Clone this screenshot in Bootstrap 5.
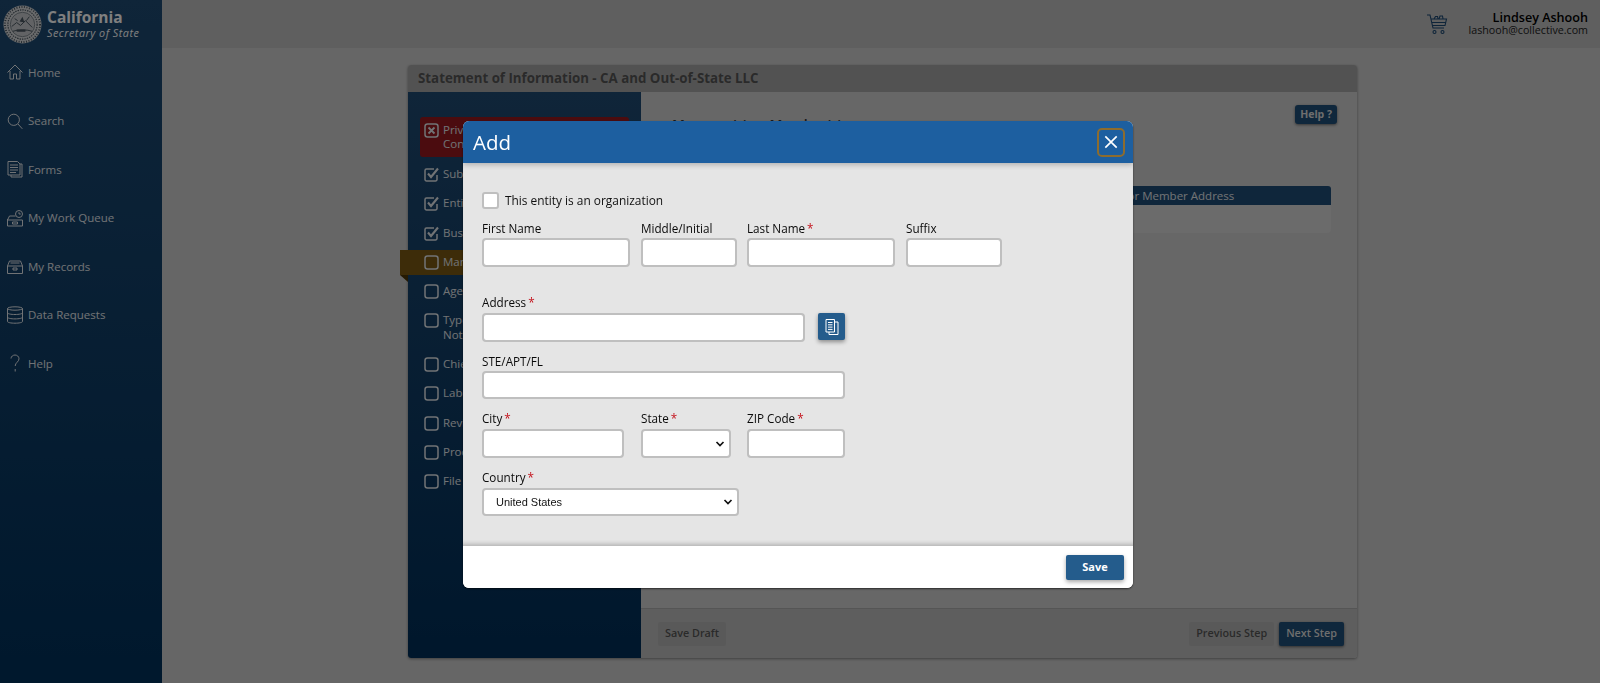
<!DOCTYPE html>
<html lang="en">
<head>
<meta charset="utf-8">
<title>Statement of Information</title>
<link href="https://cdn.jsdelivr.net/npm/bootstrap@5.3.2/dist/css/bootstrap.min.css" rel="stylesheet">
<style>
  html, body { height: 683px; overflow: hidden; }
  body { font-family: "Open Sans", "Liberation Sans", sans-serif; font-size: 12px; background: #cdcdcd; color: #000; }

  /* left menu */
  .side { width: 162px; flex: none; height: 683px; background: linear-gradient(#1e4a72, #00305a); }
  .brand { height: 48px; padding: 5px 0 0 3px; gap: 5px; color: #fff; }
  .brand svg { width: 39px; height: 39px; flex: none; }
  .brand-t { font-size: 15.5px; font-weight: 700; line-height: 18px; margin-top: 3px; }
  .brand-s { font-size: 10.8px; font-style: italic; line-height: 14px; letter-spacing: .5px; }
  .side-link { height: 48.5px; padding-left: 7px; gap: 5px; font-size: 11.5px; color: #e2e6ea; }
  .side-link svg { width: 16px; height: 18px; flex: none; fill: none; stroke: #e2e6ea; stroke-width: 1; }

  /* top strip */
  .top { height: 48px; background: #bebebe; padding-right: 12px; }
  .top svg { width: 22px; height: 22px; fill: none; stroke: #1c4872; stroke-width: 1.1; margin-right: 21px; margin-left: auto; }
  .who { text-align: right; line-height: 12.5px; }
  .who-n { font-size: 12.6px; font-weight: 600; }
  .who-e { font-size: 10.7px; color: #222; }

  /* form card behind the dialog */
  .sheet { width: 949px; height: 593px; margin: 17px 0 0 246px; background: #cfcfcf; border: 0; border-radius: 3px; box-shadow: 0 1px 3px rgba(0,0,0,.4); }
  .sheet-h { height: 27px; background: #a5a5a5; padding: 0 10px; font-size: 13.3px; font-weight: 700; color: #555; border-radius: 3px 3px 0 0; }
  .steps { width: 233px; flex: none; padding: 25px 12px 0; background: linear-gradient(#1f4a72, #002e58); border-radius: 0 0 0 3px; }
  .step { display: flex; gap: 4px; padding: 7.15px 4px; font-size: 11.5px; line-height: 14.7px; color: #e2e6ea; }
  .step svg { width: 15px; height: 15px; flex: none; fill: none; stroke: #e2e6ea; stroke-width: 1.5; }
  .step-err { background: #96181f; border-radius: 3px; padding: 5.5px 4px; margin-bottom: 2.5px; }
  .step-on { position: relative; background: #7a5812; margin: 2px 0 2px -20px; padding: 5.15px 4px 5.15px 24px; }
  .step-on::after { content: ""; position: absolute; left: 0; top: 100%; border-top: 7px solid #4a3406; border-left: 8px solid transparent; }
  .sheet-b { padding: 13px 20px 0 31px; }
  .sheet-ttl { font-size: 14px; font-weight: 600; color: #333; margin-top: 9px; }
  .btn-navy { background: #1f4e78; color: #ddd; border: 0; border-radius: 3px; font-size: 10.5px; font-weight: 700; padding: 0 5px; height: 19px; box-shadow: 0 1px 3px rgba(0,0,0,.5); }
  .mem { margin: 51px 6px 0 0; }
  .mem-nm { width: 405px; }
  .mem-h { background: #1f4c76; color: #e2e6ea; height: 19px; border-radius: 3px 3px 0 0; font-size: 11.5px; }
  .mem-b { height: 28px; background: #d6d6d6; border-radius: 0 0 4px 4px; }
  .sheet-f { height: 50px; border-top: 1px solid #aaa; background: #bdbdbd; padding: 0 13px 0 17px; gap: 5px; border-radius: 0 0 3px 0; }
  .btn-mute, .btn-go { height: 24px; border: 0; border-radius: 2px; font-size: 10.8px; font-weight: 600; padding: 0 7px; }
  .btn-mute { background: #b3b3b3; color: #555; }
  .btn-go { background: #1f4e78; color: #ddd; box-shadow: 0 1px 3px rgba(0,0,0,.5); }

  /* dialog */
  .modal-dialog.dlg { max-width: 670px; width: 670px; margin: 121px 0 0 463px; }
  .dlg .modal-content { border: 0; border-radius: 6px; overflow: hidden; height: 467px; box-shadow: 0 1px 2px rgba(0,0,0,.6); }
  .dlg .modal-header { height: 42px; background: #1d5fa0; border: 0; padding: 0 8px 0 10px; border-radius: 0; position: relative; z-index: 1; box-shadow: 0 2px 5px rgba(0,0,0,.22); }
  .dlg .modal-title { font-size: 20.5px; font-weight: 400; color: #fff; line-height: 1; }
  .btn-x { width: 28px; height: 29px; background: none; border: 2px solid #8d6c2e; border-radius: 5px; padding: 0; display: flex; align-items: center; justify-content: center; }
  .btn-x svg { width: 14px; height: 14px; stroke: #fff; stroke-width: 1.9; }
  .dlg .modal-body { background: #e5e5e5; padding: 29px 19px 0; height: 383px; flex: none; box-shadow: inset 0 -5px 4px -3px rgba(0,0,0,.22); }
  .dlg .modal-footer { --bs-modal-footer-gap: 0; height: 42px; background: #fff; border: 0; padding: 0 9px 0 0; border-radius: 0; }
  .tick-row { gap: 6px; }
  .tick { width: 17px; height: 17px; margin: 0; border: 2px solid #bfbfbf; border-radius: 4px; box-shadow: none; }
  .tick-l { font-size: 11.9px; font-weight: 500; line-height: 17px; margin: 0; color: #111; }
  .fld-l { display: block; font-size: 11.7px; font-weight: 500; line-height: 13px; height: 16px; margin: 0; color: #0a0a0a; }
  .fld-l.gap-b { height: 17px; }
  .req { color: #c4121c; margin-left: 2px; }
  .fld { height: 29px; min-height: 0; padding: 0 6px; border: 2px solid #bfbfbf; border-radius: 4px; box-shadow: none; background-color: #fff; font-size: 12px; }
  .fld-s { height: 28px; }
  select.fld { font-family: "Liberation Sans", sans-serif; font-size: 11px; color: #111; padding: 0 20px 0 12px; background-image: url("data:image/svg+xml,%3csvg xmlns='http://www.w3.org/2000/svg' viewBox='0 0 10 8'%3e%3cpath fill='none' stroke='%23111' stroke-width='1.7' d='M1.500 2L5 5.500 8.500 2'/%3e%3c/svg%3e"); background-size: 10px 8px; background-position: right 4px center; }
  .row-a { display: grid; grid-template-columns: 159px 106px 159px 96px; margin-top: 13px; }
  .row-b { display: grid; grid-template-columns: 159px 106px 98px; margin-top: 13px; }
  .blk-a { margin-top: 29px; }
  .blk-b { margin-top: 13px; }
  .w-a { width: 148px; } .w-b { width: 96px; } .w-c { width: 142px; } .w-d { width: 90px; } .w-e { width: 98px; }
  .w-f { width: 323px; margin-right: 13px; } .w-g { width: 363px; } .w-h { width: 257px; }
  .btn-copy { width: 27px; height: 27px; padding: 0; background: #245c8c; border: 0; border-radius: 2px; box-shadow: 0 2px 4px rgba(0,0,0,.4); display: flex; align-items: center; justify-content: center; }
  .btn-copy svg { width: 18px; height: 18px; fill: none; stroke: #fff; stroke-width: 1; }
  .btn-save { width: 58px; height: 25px; padding: 0; background: #245c8c; color: #fff; border: 0; border-radius: 2px; font-size: 11px; font-weight: 700; box-shadow: 0 2px 4px rgba(0,0,0,.35); }
</style>
</head>
<body>
<div class="d-flex">
  <aside class="side">
    <div class="brand d-flex">
      <svg viewBox="0 0 40 40">
        <circle cx="20" cy="20" r="19.5" fill="#d4d6d8"/>
        <circle cx="20" cy="20" r="18" fill="none" stroke="#4a5660" stroke-width="2" stroke-dasharray="1 1.6"/>
        <circle cx="20" cy="20" r="15" fill="none" stroke="#4a5660" stroke-width="1.200" stroke-dasharray="1.500 1"/>
        <circle cx="20" cy="20" r="12.500" fill="#c4c7ca" stroke="#4a5660" stroke-width=".6"/>
        <path d="M9 22l5-4 4 3 5-5 7 7M10 27c5-2 15-2 20 0M12 14l3 2M27 12l-3 4" fill="none" stroke="#4a5660" stroke-width="1"/>
        <path d="M17 17l3-5 2 6zM14 25h9v2.500h-9z" fill="#4a5660"/>
      </svg>
      <div>
        <div class="brand-t">California</div>
        <div class="brand-s">Secretary of State</div>
      </div>
    </div>
    <div class="side-link d-flex align-items-center">
      <svg viewBox="0 0 16 18"><path d="M.5 9.500L8 2l7.500 7.500M3 8v8h3.500v-5h3v5H13V8"/></svg>Home
    </div>
    <div class="side-link d-flex align-items-center">
      <svg viewBox="0 0 16 18"><circle cx="6.800" cy="7.800" r="5.600"/><path d="M11 12l4.300 4.800"/></svg>Search
    </div>
    <div class="side-link d-flex align-items-center">
      <svg viewBox="0 0 16 18"><path d="M1 1.500h9.500l2.500 2.500v11H1zM13 4h2v13H4v-2M3 5h8M3 7.500h8M3 10h8M3 12.500h6"/></svg>Forms
    </div>
    <div class="side-link d-flex align-items-center">
      <svg viewBox="0 0 16 18"><path d="M.5 10v7h15v-6H.5l2-4h6M5.500 13h5v2h-5z"/><circle cx="12" cy="5" r="3.500"/><path d="M12 3.200V5h1.800"/></svg>My Work Queue
    </div>
    <div class="side-link d-flex align-items-center">
      <svg viewBox="0 0 16 18"><path d="M.5 9v7.500h15V9zM.5 9l2-5h11l2 5M3.500 6h9M6 11h4v2H6z"/></svg>My Records
    </div>
    <div class="side-link d-flex align-items-center">
      <svg viewBox="0 0 16 18"><ellipse cx="8" cy="2.500" rx="7.500" ry="1.700"/><path d="M.5 2.500v13c0 1 3.400 1.700 7.500 1.700s7.500-.7 7.500-1.700v-13M.5 6.800c0 1 3.400 1.700 7.500 1.700s7.500-.7 7.500-1.700M.5 11.200c0 1 3.400 1.700 7.500 1.700s7.500-.7 7.500-1.700"/></svg>Data Requests
    </div>
    <div class="side-link d-flex align-items-center">
      <svg viewBox="0 0 16 18"><path d="M4 4.500C4 2.500 6 1 8 1s4 1.500 4 3.800c0 3-3.800 3.800-3.800 7.200M8.200 15v2.500"/></svg>Help
    </div>
  </aside>

  <div class="flex-grow-1">
    <header class="top d-flex align-items-center">
      <svg viewBox="0 0 22 22"><path d="M1 2h3l3 13h11M4.800 6h15.700l-1.500 6.500H6.300M6 9.500h14"/><path d="M8 6l1.500-2.500h2L12 6M13 6l1-3h2.500L17 6"/><circle cx="8.500" cy="19" r="1.500"/><circle cx="16.500" cy="19" r="1.500"/></svg>
      <div class="who">
        <div class="who-n">Lindsey Ashooh</div>
        <div class="who-e">lashooh@collective.com</div>
      </div>
    </header>

    <div class="card sheet">
      <div class="sheet-h d-flex align-items-center">Statement of Information - CA and Out-of-State LLC</div>
      <div class="d-flex flex-grow-1">
        <div class="steps">
          <div class="step step-err">
            <svg viewBox="0 0 15 15"><rect x="1" y="1" width="13" height="13" rx="2.500"/><path d="M4.500 4.500l6 6M10.500 4.500l-6 6" stroke-width="1.800"/></svg>
            <span>Privacy Statement and<br>Confidentiality</span>
          </div>
          <div class="step"><svg viewBox="0 0 15 15"><path d="M13 8v4.500a1.500 1.500 0 0 1-1.500 1.500h-9A1.500 1.500 0 0 1 1 12.500v-9A1.500 1.500 0 0 1 2.500 2H10"/><path d="M4 6.500l3 3.500 7-8.500" stroke-width="2.100"/></svg><span>Submitter</span></div>
          <div class="step"><svg viewBox="0 0 15 15"><path d="M13 8v4.500a1.500 1.500 0 0 1-1.500 1.500h-9A1.500 1.500 0 0 1 1 12.500v-9A1.500 1.500 0 0 1 2.500 2H10"/><path d="M4 6.500l3 3.500 7-8.500" stroke-width="2.100"/></svg><span>Entity Information</span></div>
          <div class="step"><svg viewBox="0 0 15 15"><path d="M13 8v4.500a1.500 1.500 0 0 1-1.500 1.500h-9A1.500 1.500 0 0 1 1 12.500v-9A1.500 1.500 0 0 1 2.500 2H10"/><path d="M4 6.500l3 3.500 7-8.500" stroke-width="2.100"/></svg><span>Business Addresses</span></div>
          <div class="step step-on"><svg viewBox="0 0 15 15"><rect x="1" y="1" width="13" height="13" rx="2.500"/></svg><span>Manager(s) or Member(s)</span></div>
          <div class="step"><svg viewBox="0 0 15 15"><rect x="1" y="1" width="13" height="13" rx="2.500"/></svg><span>Agent for Service of Process</span></div>
          <div class="step"><svg viewBox="0 0 15 15"><rect x="1" y="1" width="13" height="13" rx="2.500"/></svg><span>Type of Business and Email<br>Notifications</span></div>
          <div class="step"><svg viewBox="0 0 15 15"><rect x="1" y="1" width="13" height="13" rx="2.500"/></svg><span>Chief Executive Officer</span></div>
          <div class="step"><svg viewBox="0 0 15 15"><rect x="1" y="1" width="13" height="13" rx="2.500"/></svg><span>Labor Judgment</span></div>
          <div class="step"><svg viewBox="0 0 15 15"><rect x="1" y="1" width="13" height="13" rx="2.500"/></svg><span>Review</span></div>
          <div class="step"><svg viewBox="0 0 15 15"><rect x="1" y="1" width="13" height="13" rx="2.500"/></svg><span>Processing Options</span></div>
          <div class="step"><svg viewBox="0 0 15 15"><rect x="1" y="1" width="13" height="13" rx="2.500"/></svg><span>File</span></div>
        </div>
        <div class="flex-grow-1 d-flex flex-column">
          <div class="sheet-b flex-grow-1">
            <div class="d-flex justify-content-between align-items-start">
              <div class="sheet-ttl">Manager(s) or Member(s)</div>
              <button class="btn-navy" type="button">Help ?</button>
            </div>
            <div class="mem">
              <div class="mem-h d-flex align-items-center">
                <span class="mem-nm ps-2">Manager or Member Name</span>
                <span>Manager or Member Address</span>
              </div>
              <div class="mem-b"></div>
            </div>
          </div>
          <div class="sheet-f d-flex align-items-center">
            <button class="btn-mute me-auto" type="button">Save Draft</button>
            <button class="btn-mute" type="button">Previous Step</button>
            <button class="btn-go" type="button">Next Step</button>
          </div>
        </div>
      </div>
    </div>
  </div>
</div>

<div class="modal-backdrop show"></div>
<div class="modal d-block" tabindex="-1">
  <div class="modal-dialog dlg">
    <div class="modal-content">
      <div class="modal-header">
        <h5 class="modal-title">Add</h5>
        <button class="btn-x ms-auto" type="button" aria-label="Close"><svg viewBox="0 0 16 16"><path d="M1.500 1.500l13 13M14.500 1.500l-13 13"/></svg></button>
      </div>
      <div class="modal-body">
        <div class="d-flex align-items-center tick-row">
          <input class="form-check-input tick" type="checkbox" id="isOrg">
          <label class="tick-l" for="isOrg">This entity is an organization</label>
        </div>
        <div class="row-a">
          <div><label class="fld-l">First Name</label><input class="form-control fld w-a"></div>
          <div><label class="fld-l">Middle/Initial</label><input class="form-control fld w-b"></div>
          <div><label class="fld-l">Last Name<span class="req">*</span></label><input class="form-control fld w-a"></div>
          <div><label class="fld-l">Suffix</label><input class="form-control fld w-b"></div>
        </div>
        <div class="blk-a">
          <label class="fld-l gap-b">Address<span class="req">*</span></label>
          <div class="d-flex">
            <input class="form-control fld w-f">
            <button class="btn-copy" type="button"><svg viewBox="0 0 18 18"><path d="M3 1.500h8.500V14H3zM11.500 4H15v12.500H6V14M5 4.500h4.500M5 6.800h4.500M5 9.100h4.500M5 11.400h4.500"/></svg></button>
          </div>
        </div>
        <div class="blk-b">
          <label class="fld-l">STE/APT/FL</label>
          <input class="form-control fld fld-s w-g">
        </div>
        <div class="row-b">
          <div><label class="fld-l gap-b">City<span class="req">*</span></label><input class="form-control fld w-c"></div>
          <div><label class="fld-l gap-b">State<span class="req">*</span></label><select class="form-select fld w-d"><option></option></select></div>
          <div><label class="fld-l gap-b">ZIP Code<span class="req">*</span></label><input class="form-control fld w-e"></div>
        </div>
        <div class="blk-b">
          <label class="fld-l gap-b">Country<span class="req">*</span></label>
          <select class="form-select fld fld-s w-h"><option>United States</option></select>
        </div>
      </div>
      <div class="modal-footer">
        <button class="btn-save" type="button">Save</button>
      </div>
    </div>
  </div>
</div>
<script src="https://cdn.jsdelivr.net/npm/bootstrap@5.3.2/dist/js/bootstrap.bundle.min.js"></script>
</body>
</html>
